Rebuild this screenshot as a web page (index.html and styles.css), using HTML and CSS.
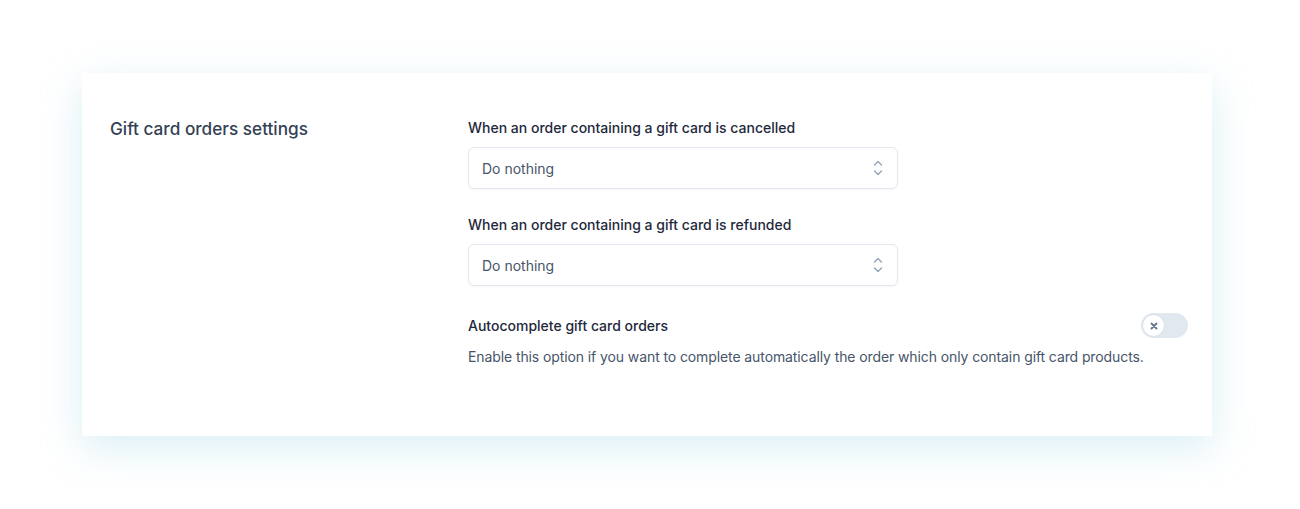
FILE: index.html
```html
<!DOCTYPE html>
<html lang="en">
<head>
    <meta charset="UTF-8">
    <meta name="viewport" content="width=device-width, initial-scale=1.0">
    <title>Gift card orders settings</title>
    <link rel="stylesheet" href="styles.css">
</head>
<body>
    <div class="card">
        <h2 class="card-title">Gift card orders settings</h2>
        <div class="fields">
            <div class="field">
                <label class="field-label">When an order containing a gift card is cancelled</label>
                <div class="select">
                    <span>Do nothing</span>
                    <svg class="chevrons" width="10" height="16" viewBox="0 0 10 16" fill="none" stroke="#94a3b8" stroke-width="1.4" stroke-linecap="round" stroke-linejoin="round">
                        <path d="M1.5 5 L5 1.5 L8.5 5"/>
                        <path d="M1.5 11 L5 14.5 L8.5 11"/>
                    </svg>
                </div>
            </div>
            <div class="field">
                <label class="field-label">When an order containing a gift card is refunded</label>
                <div class="select">
                    <span>Do nothing</span>
                    <svg class="chevrons" width="10" height="16" viewBox="0 0 10 16" fill="none" stroke="#94a3b8" stroke-width="1.4" stroke-linecap="round" stroke-linejoin="round">
                        <path d="M1.5 5 L5 1.5 L8.5 5"/>
                        <path d="M1.5 11 L5 14.5 L8.5 11"/>
                    </svg>
                </div>
            </div>
            <div class="toggle-row">
                <div class="toggle-head">
                    <span class="field-label">Autocomplete gift card orders</span>
                    <div class="toggle">
                        <div class="knob">
                            <svg width="8" height="8" viewBox="0 0 8 8" stroke="#64748b" stroke-width="1.8" stroke-linecap="round">
                                <path d="M1.5 1.5 L6.5 6.5 M6.5 1.5 L1.5 6.5"/>
                            </svg>
                        </div>
                    </div>
                </div>
                <p class="help">Enable this option if you want to complete automatically the order which only contain gift card products.</p>
            </div>
        </div>
    </div>
</body>
</html>
```

FILE: styles.css
```css
body {
    margin: 0;
    font-family: Inter, "Noto Sans", sans-serif;
    background: #ffffff;
    padding: 73px 88px 73px 82px;
}
.card {
    background: white;
    border-radius: 2px;
    box-shadow: 0 12px 40px rgba(150, 210, 225, 0.35);
    display: flex;
    padding: 45px 24px 68px 28px;
    height: 363px;
    box-sizing: border-box;
}
.card-title {
    width: 358px;
    flex-shrink: 0;
    margin: 0;
    font-size: 17.2px;
    font-weight: 500;
    color: #334155;
    line-height: 22px;
}
.fields {
    flex: 1;
}
.field {
    margin-bottom: 26px;
}
.field-label {
    display: block;
    font-size: 14px;
    font-weight: 500;
    color: #1e293b;
    line-height: 20px;
    margin-bottom: 9px;
}
.select {
    width: 430px;
    height: 42px;
    box-sizing: border-box;
    border: 1px solid #e2e8f0;
    border-radius: 6px;
    display: flex;
    align-items: center;
    justify-content: space-between;
    padding: 0 13px;
    font-size: 14px;
    color: #475569;
    box-shadow: 0 1px 2px rgba(15, 23, 42, 0.04);
}
.chevrons {
    margin-right: 1px;
}
.toggle-row {
    padding-top: 1px;
}
.toggle-head {
    display: flex;
    justify-content: space-between;
    align-items: center;
}
.toggle-head .field-label {
    margin-bottom: 0;
}
.toggle {
    width: 47px;
    height: 25px;
    border-radius: 13px;
    background: #e2e8f0;
    display: flex;
    align-items: center;
}
.knob {
    width: 23px;
    height: 23px;
    box-sizing: border-box;
    border-radius: 50%;
    background: white;
    border: 1px solid #d5dde7;
    margin-left: 1px;
    display: flex;
    align-items: center;
    justify-content: center;
}
.help {
    margin: 9px 0 0;
    font-size: 14px;
    letter-spacing: -0.1px;
    color: #475569;
    line-height: 20px;
}
```
